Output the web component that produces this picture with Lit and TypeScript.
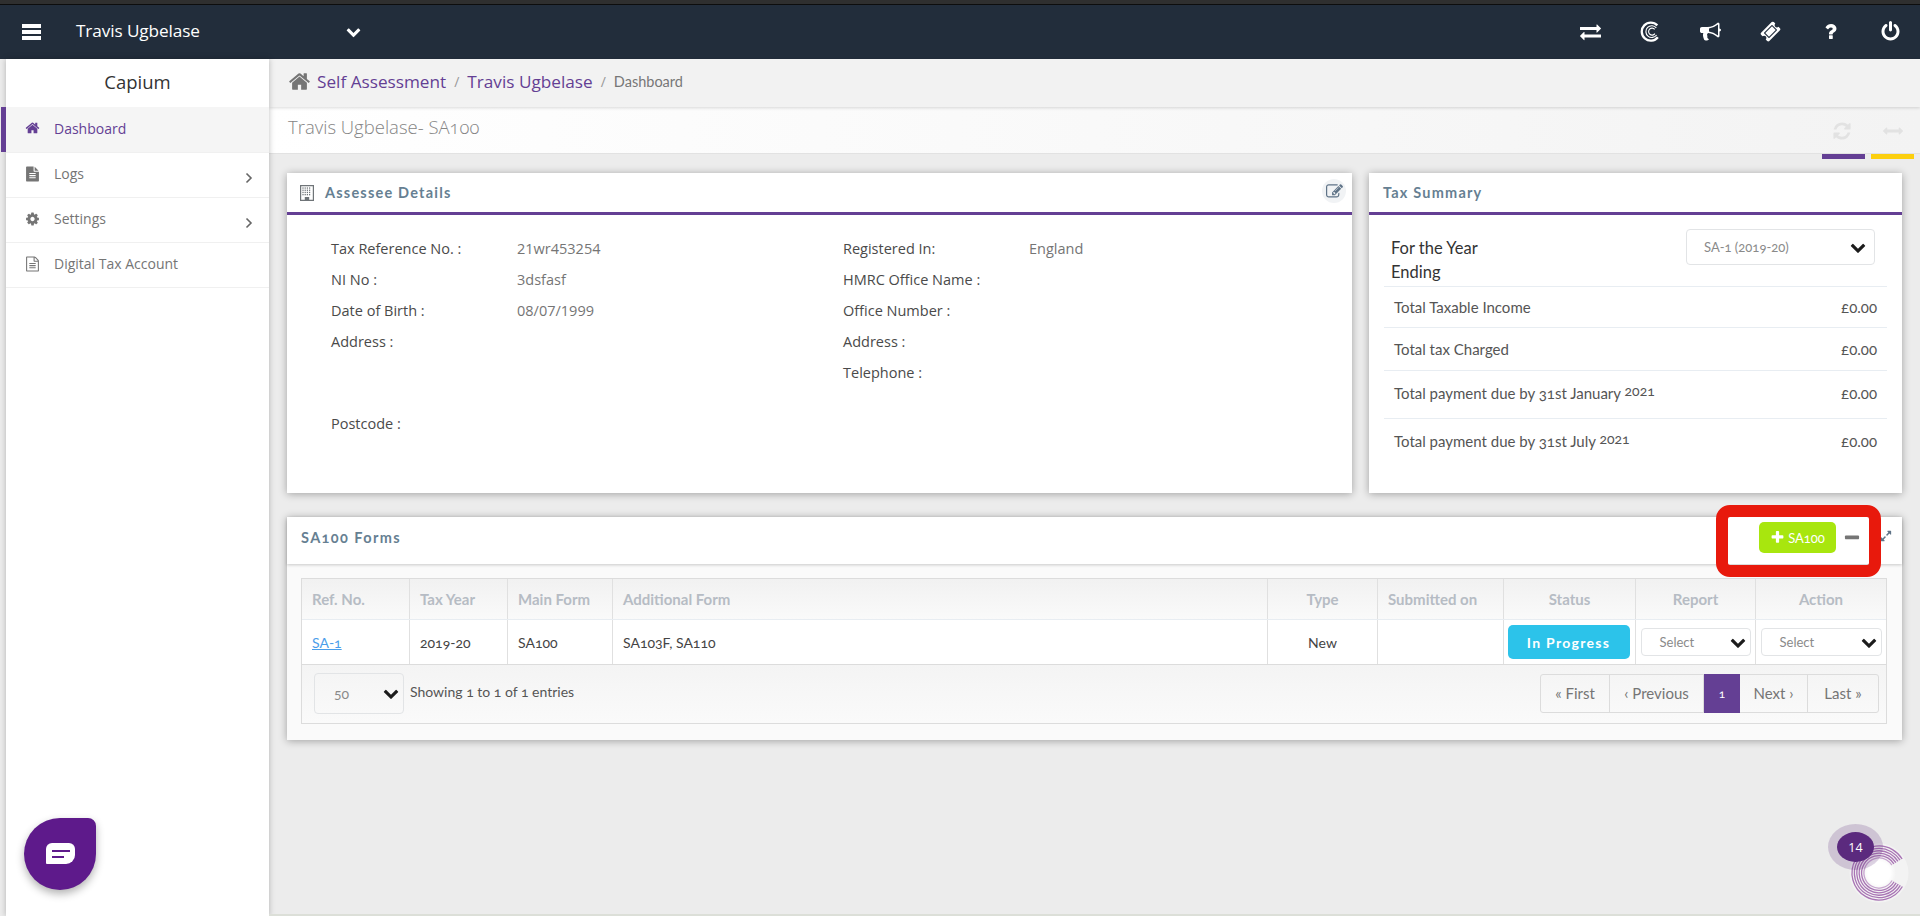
import { LitElement, html, css, svg } from "lit";
import { customElement } from "lit/decorators.js";

const P: Record<string, string> = {
  home: "M1472 992v480q0 26-19 45t-45 19h-384v-384h-256v384h-384q-26 0-45-19t-19-45v-480q0-1 .5-3t.5-3l575-474 575 474q1 2 1 6zm223-69l-62 74q-8 9-21 11h-3q-13 0-21-7l-692-577-692 577q-12 8-24 7-13-2-21-11l-62-74q-8-10-7-23.500t11-21.500l719-599q32-26 76-26t76 26l244 204v-195q0-14 9-23t23-9h192q14 0 23 9t9 23v408l219 182q10 8 11 21.500t-7 23.500z",
  cog: "M1152 896q0-106-75-181t-181-75-181 75-75 181 75 181 181 75 181-75 75-181zm512-109v222q0 12-8 23t-20 13l-185 28q-19 54-39 91 35 50 107 138 10 12 10 25t-9 23q-27 37-99 108t-94 71q-12 0-26-9l-138-108q-44 23-91 38-16 136-29 186-7 28-36 28h-222q-14 0-24.500-8.500t-11.500-21.500l-28-184q-49-16-90-37l-141 107q-10 9-25 9-14 0-25-11-126-114-165-168-7-10-7-23 0-12 8-23 15-21 51-66.500t54-70.500q-27-50-41-99l-183-27q-13-2-21-12.500t-8-23.500v-222q0-12 8-23t19-13l186-28q14-46 39-92-40-57-107-138-10-12-10-24 0-10 9-23 26-36 98.500-107.500t94.500-71.500q13 0 26 10l138 107q44-23 91-38 16-136 29-186 7-28 36-28h222q14 0 24.500 8.500t11.500 21.500l28 184q49 16 90 37l142-107q9-9 24-9 13 0 25 10 129 119 165 170 7 8 7 22 0 12-8 23-15 21-51 66.500t-54 70.500q26 50 41 98l183 28q13 2 21 12.500t8 23.500z",
  power: "M1664 896q0 156-61 298t-164 245-245 164-298 61-298-61-245-164-164-245-61-298q0-182 80.500-343t226.500-270q43-32 95.500-25t83.500 50q32 42 24.500 94.500t-49.500 84.500q-98 74-151.500 181t-53.500 228q0 104 40.500 198.500t109.500 163.500 163.500 109.500 198.500 40.500 198.500-40.500 163.500-109.500 109.500-163.500 40.500-198.500q0-121-53.500-228t-151.500-181q-42-32-49.500-84.500t24.500-94.500q31-43 84-50t95 25q146 109 226.500 270t80.500 343zm-640-768v640q0 52-38 90t-90 38-90-38-38-90v-640q0-52 38-90t90-38 90 38 38 90z",
  refresh: "M1639 1056q0 5-1 7-64 268-268 434.500t-478 166.500q-146 0-282.500-55t-243.500-157l-129 129q-19 19-45 19t-45-19-19-45v-448q0-26 19-45t45-19h448q26 0 45 19t19 45-19 45l-137 137q71 66 161 102t187 36q134 0 250-65t186-179q11-17 53-117 8-23 30-23h192q13 0 22.500 9.500t9.500 22.500zm25-800v448q0 26-19 45t-45 19h-448q-26 0-45-19t-19-45 19-45l138-138q-148-137-349-137-134 0-250 65t-186 179q-11 17-53 117-8 23-30 23h-199q-13 0-22.500-9.500t-9.500-22.500v-7q65-268 270-434.500t480-166.500q146 0 284 55.500t245 156.500l130-129q19-19 45-19t45 19 19 45z",
  exchange: "M1792 1184v192q0 13-9.500 22.500t-22.500 9.500h-1376v192q0 13-9.500 22.500t-22.500 9.500q-12 0-24-10l-319-320q-9-9-9-22 0-14 9-23l320-320q9-9 23-9 13 0 22.500 9.500t9.500 22.500v192h1376q13 0 22.500 9.500t9.500 22.500zm0-544q0 14-9 23l-320 320q-9 9-23 9-13 0-22.500-9.500t-9.500-22.500v-192h-1376q-13 0-22.500-9.500t-9.500-22.500v-192q0-13 9.500-22.500t22.500-9.500h1376v-192q0-14 9-23t23-9q12 0 24 10l319 319q9 9 9 23z",
  chev: "M1683 808l-742 741q-19 19-45 19t-45-19l-742-741q-19-19-19-45.500t19-45.500l166-165q19-19 45-19t45 19l531 531 531-531q19-19 45-19t45 19l166 165q19 19 19 45.500t-19 45.500z",
  bullhorn: "M1664 640q53 0 90.500 37.500t37.500 90.500-37.500 90.500-90.500 37.500v384q0 52-38 90t-90 38q-417-347-812-380-58 19-91 66t-31 100.500 40 92.500q-20 33-23 65.500t6 58 33.500 55 48 50 61.500 50.500q-29 58-111.500 83t-168.500 11.500-132-55.500q-7-23-29.500-87.500t-32-94.500-23-89-15-101 3.500-98.500 22-110.500h-122q-66 0-113-47t-47-113v-192q0-66 47-113t113-47h480q435 0 896-384 52 0 90 38t38 90v384zm-128 604v-954q-394 302-768 343v270q377 42 768 341z",
  ticket: "M1024 452l316 316-572 572-316-316zm-211 979l618-618q19-19 19-45t-19-45l-362-362q-18-18-45-18t-45 18l-618 618q-19 19-19 45t19 45l362 362q18 18 45 18t45-18zm889-637l-907 908q-37 37-90.500 37t-90.500-37l-126-126q56-56 56-136t-56-136-136-56-136 56l-125-126q-37-37-37-90.500t37-90.500l907-906q37-37 90.500-37t90.500 37l125 125q-56 56-56 136t56 136 136 56 136-56l126 125q37 37 37 90.500t-37 90.500z",
  question: "M1088 1256v240q0 16-12 28t-28 12h-240q-16 0-28-12t-12-28v-240q0-16 12-28t28-12h240q16 0 28 12t12 28zm316-600q0 54-15.500 101t-35 76.500-55 59.500-57.500 43.500-61 35.500q-41 23-68.500 65t-27.500 67q0 17-12 32.500t-28 15.500h-240q-15 0-25.500-18.500t-10.500-37.500v-45q0-83 65-156.500t143-108.500q59-27 84-56t25-76q0-42-46.500-74t-107.500-32q-65 0-108 29-35 25-107 115-13 16-31 16-12 0-25-8l-164-125q-13-10-15.500-25t5.500-28q160-266 464-266 80 0 161 31t146 83 106 127.500 41 158.500z",
  fileo: "M1596 380q28 28 48 76t20 88v1152q0 40-28 68t-68 28h-1344q-40 0-68-28t-28-68v-1600q0-40 28-68t68-28h896q40 0 88 20t76 48zm-444-244v376h376q-10-29-22-41l-313-313q-12-12-41-22zm384 1528v-1024h-416q-40 0-68-28t-28-68v-416h-768v1536h1280zm-1024-864q0-14 9-23t23-9h704q14 0 23 9t9 23v64q0 14-9 23t-23 9h-704q-14 0-23-9t-9-23v-64zm736 224q14 0 23 9t9 23v64q0 14-9 23t-23 9h-704q-14 0-23-9t-9-23v-64q0-14 9-23t23-9h704zm0 256q14 0 23 9t9 23v64q0 14-9 23t-23 9h-704q-14 0-23-9t-9-23v-64q0-14 9-23t23-9h704z",
  file: "M1596 476q14 14 28 36h-472v-472q22 14 36 28zm-476 164h544v1056q0 40-28 68t-68 28h-1344q-40 0-68-28t-28-68v-1600q0-40 28-68t68-28h800v544q0 40 28 68t68 28zm160 736v-64q0-14-9-23t-23-9h-704q-14 0-23 9t-9 23v64q0 14 9 23t23 9h704q14 0 23-9t9-23zm0-256v-64q0-14-9-23t-23-9h-704q-14 0-23 9t-9 23v64q0 14 9 23t23 9h704q14 0 23-9t9-23zm0-256v-64q0-14-9-23t-23-9h-704q-14 0-23 9t-9 23v64q0 14 9 23t23 9h704q14 0 23-9t9-23z",
  edit: "M888 1184l116-116-152-152-116 116v56h96v96h56zm440-720q-16-16-33 1l-350 350q-17 17-1 33t33-1l350-350q17-17 1-33zm80 594v190q0 119-84.500 203.500t-203.500 84.500h-832q-119 0-203.500-84.500t-84.500-203.500v-832q0-119 84.500-203.500t203.500-84.500h832q63 0 117 25 15 7 18 23 3 17-9 29l-49 49q-14 14-32 8-23-6-45-6h-832q-66 0-113 47t-47 113v832q0 66 47 113t113 47h832q66 0 113-47t47-113v-126q0-13 9-22l64-64q15-15 35-7t20 29zm-96-738l288 288-672 672h-288v-288zm444 132l-92 92-288-288 92-92q28-28 68-28t68 28l152 152q28 28 28 68t-28 68z",
  arrowsh: "M1792 896q0 26-19 45l-256 256q-19 19-45 19t-45-19-19-45v-128h-1024v128q0 26-19 45t-45 19-45-19l-256-256q-19-19-19-45t19-45l256-256q19-19 45-19t45 19 19 45v128h1024v-128q0-26 19-45t45-19 45 19l256 256q19 19 19 45z",
  expand: "M883 1056q0 13-10 23l-332 332 144 144q19 19 19 45t-19 45-45 19h-448q-26 0-45-19t-19-45v-448q0-26 19-45t45-19 45 19l144 144 332-332q10-10 23-10t23 10l114 114q10 10 10 23zm781-864v448q0 26-19 45t-45 19-45-19l-144-144-332 332q-10 10-23 10t-23-10l-114-114q-10-10-10-23t10-23l332-332-144-144q-19-19-19-45t19-45 45-19h448q26 0 45 19t19 45z",
  plus: "M1600 736v192q0 40-28 68t-68 28h-416v416q0 40-28 68t-68 28h-192q-40 0-68-28t-28-68v-416h-416q-40 0-68-28t-28-68v-192q0-40 28-68t68-28h416v-416q0-40 28-68t68-28h192q40 0 68 28t28 68v416h416q40 0 68 28t28 68z",
  minus: "M1600 736v192q0 40-28 68t-68 28h-1216q-40 0-68-28t-28-68v-192q0-40 28-68t68-28h1216q40 0 68 28t28 68z",
};

const icon = (name: string, cls = "") =>
  html`<svg class="ic ${cls}" viewBox="0 0 1792 1792" fill="currentColor" aria-hidden="true"><path d=${P[name]}></path></svg>`;

const building = html`<svg class="ic bld" viewBox="0 0 14 16" aria-hidden="true">
  <path fill="currentColor" fill-rule="evenodd" d="M0 0h14v16H0zM1.2 1.2v13.6h3.6V12h4.400v2.800h3.600V1.200z"></path>
  ${[2.4, 4.6, 6.8, 9].map((x) =>
    [2.4, 4.6, 6.8, 9].map(
      (y) => svg`<rect x=${x} y=${y} width="1.200" height="1.300" fill="currentColor"></rect>`
    )
  )}
</svg>`;

const angle = html`<svg class="angle" viewBox="0 0 8 12" aria-hidden="true"><path d="M1.500 1.500 6 6l-4.500 4.500" fill="none" stroke="currentColor" stroke-width="1.600"></path></svg>`;

const cmark = html`<svg class="ic" viewBox="0 0 20 20" aria-hidden="true" fill="none" stroke="currentColor">
  <path stroke-width="2.200" d="M16.500 4.200A8.600 8.600 0 1 0 17 15.500"></path>
  <path stroke-width="1.100" d="M15.500 6.500A5.600 5.600 0 1 0 15.800 13.300"></path>
  <path stroke-width="1.100" d="M14 8A3.300 3.300 0 1 0 14.200 12"></path>
</svg>`;

@customElement("app-root")
export class AppRoot extends LitElement {
  static styles = css`
    :host {
      display: block;
      position: relative;
      width: 1920px;
      height: 916px;
      overflow: hidden;
      background: #ececec;
      font-family: "Open Sans", "Noto Sans", sans-serif;
      color: #555;
    }
    .ic { display: block; width: 1em; height: 1em; flex: none; }
    .topline { height: 4px; background: #2f2f2f; border-bottom: 1px solid #0d0d0d; }
    .nav { height: 54px; background: #222d3b; color: #fff; display: flex; align-items: center; }
    .burger { display: block; width: 19px; height: 16px; margin-left: 22px; flex: none; }
    .nav .name { margin-left: 35px; font-size: 17.200px; width: 270px; padding-bottom: 4px; letter-spacing: -0.100px; }
    .navchev { font-size: 15px; margin-bottom: 1px; }
    .navicons { margin-left: auto; display: flex; }
    .navicons span { width: 60px; display: flex; justify-content: center; font-size: 21px; margin-top: -1px; }

    .layout { display: flex; height: 857px; }
    .side {
      width: 263px; margin-left: 6px; background: #fff; position: relative; z-index: 2;
      box-shadow: 0 0 6px rgba(0,0,0,.25);
    }
    .brand { height: 48px; padding-bottom: 3px; box-sizing: border-box; display: flex; align-items: center; justify-content: center; font-size: 18.500px; color: #333; }
    .mi {
      height: 45px; box-sizing: border-box; display: flex; align-items: center; padding: 0 0 3px 19px; gap: 14px;
      font-size: 14px; color: #757575; border-bottom: 1px solid #f0f0f0; position: relative;
    }
    .mi .ic { font-size: 16px; width: 15px; height: 16px; }
    .mi .angle { position: absolute; right: 16px; width: 8px; height: 12px; top: 19px; color: #666; }
    .mi.active { background: #f5f5f5; color: #643f94; height: 46px; }
    .mi.active::before { content: ""; position: absolute; left: -5px; top: 0; bottom: 0; width: 5px; background: #643f94; }

    .main { flex: 1; min-width: 0; display: flex; flex-direction: column; }
    .crumb {
      height: 48px; box-sizing: border-box; background: #f2f2f2; display: flex; align-items: center; padding: 0 0 3px 19px;
      box-shadow: 0 1px 3px rgba(0,0,0,.15); position: relative; z-index: 1;
    }
    .crumb .ic { font-size: 23px; color: #757575; margin-right: 6px; }
    .crumb a { font-size: 17.200px; color: #643f94; }
    .crumb .sep { color: #999; margin: 0 8px; font-size: 14px; }
    .crumb .cur { font-size: 14.500px; color: #777; font-family: "Lato", sans-serif; }
    .titlebar {
      height: 46px; border-bottom: 1px solid #e2e2e2; display: flex; align-items: flex-start;
      background: linear-gradient(90deg, #fff 0%, #f3f3f3 100%); padding-left: 19px;
    }
    .titlebar h1 {
      margin: 7px 0 0; font-weight: 300; font-size: 18.500px; color: #858585; flex: 1;
      font-family: "Open Sans", sans-serif; font-variant-numeric: oldstyle-nums;
    }
    .tool {
      width: 43px; height: 52px; box-sizing: border-box; border-bottom: 5px solid #643f94;
      margin-left: 6px; color: #e2e2e2; display: flex; justify-content: center; padding: 14px 4px 0 0;
      font-size: 20px;
    }
    .tool.y { border-bottom-color: #fccf0e; margin-right: 6px; padding-right: 0; }
    .content { flex: 1; padding: 19px 18px 0; display: flex; flex-direction: column; gap: 24px; }
    .row { display: flex; gap: 17px; }
    .card { background: #fff; box-shadow: 0 1px 8px rgba(0,0,0,.32); }
    .assessee { width: 1065px; height: 320px; }
    .tax { width: 533px; height: 320px; }
    .ch {
      height: 39px; border-bottom: 3px solid #643f94; display: flex; align-items: center; padding-left: 13px;
      font-family: "Lato", sans-serif; font-weight: 700; font-size: 14.500px; letter-spacing: 1.200px; color: #667f92;
      font-variant-numeric: oldstyle-nums; position: relative;
    }
    .ch .bld { width: 14px; height: 16px; margin-right: 11px; color: #6f7478; }
    .tax .ch { padding-left: 14px; }
    .editbtn {
      position: absolute; right: 6px; top: 6px; width: 24px; height: 24px; background: #f1f3f5; border-radius: 50%;
      display: flex; align-items: center; justify-content: center; font-size: 17px; color: #5f7387;
    }
    .details { display: flex; padding: 18px 0 0 44px; font-size: 14.500px; }
    .dcol { display: flex; flex-direction: column; }
    .dcol.a { width: 512px; }
    .dl { height: 31px; display: flex; align-items: center; color: #4a4a4a; }
    .dl b { font-weight: 400; width: 186px; flex: none; }
    .dl span { color: #757575; }
    .dl.tall { height: 82px; align-items: flex-start; padding-top: 6px; box-sizing: border-box; }

    .taxbody { padding: 0 15px; font-family: "Lato", sans-serif; font-variant-numeric: oldstyle-nums; color: #555; font-size: 15px; }
    .yr { display: flex; justify-content: space-between; height: 71px; padding: 21px 0 0 7px; box-sizing: border-box; font-size: 16.500px; color: #333; line-height: 24px; }
    .yr .sel { width: 189px; margin: -7px 12px 0 0; height: 36px; }
    .sel {
      border: 1px solid #e2e4e6; border-radius: 4px; box-sizing: border-box; display: flex; align-items: center;
      justify-content: space-between; background: #fff; font-size: 13px; color: #8a8a8a; padding: 0 8px 0 17px;
      font-family: "Lato", sans-serif; font-variant-numeric: oldstyle-nums;
    }
    .sel .ic { font-size: 16px; color: #1c1c1c; }
    .tr { display: flex; justify-content: space-between; align-items: center; border-top: 1px solid #e8edf2; padding: 0 10px; height: 40px; }
    .tr.t2 { height: 42px; }
    .tr.t3, .tr.t4 { height: 48px; padding-bottom: 4px; box-sizing: border-box; }
    .tr .sup { font-size: 14px; position: relative; top: -3px; }

    .forms { width: 1615px; height: 223px; }
    .fh {
      height: 47px; box-sizing: border-box; padding: 0 0 6px 14px; display: flex; align-items: center; position: relative;
      font-family: "Lato", sans-serif; font-weight: 700; font-size: 14.500px; letter-spacing: 1.400px; color: #667f92;
      font-variant-numeric: oldstyle-nums; box-shadow: 0 1px 3px rgba(0,0,0,.2);
    }
    .addbtn {
      position: absolute; left: 1472px; top: 5px; width: 77px; height: 31px; background: #a8e60e; border-radius: 5px;
      color: #fff; display: flex; align-items: center; justify-content: center; gap: 3px; font-size: 13px; letter-spacing: 0; font-weight: 400;
    }
    .addbtn .ic { font-size: 15px; }
    .minusbtn { position: absolute; left: 1556px; top: 12px; font-size: 18px; color: #757575; }
    .expbtn { position: absolute; left: 1593px; top: 13px; font-size: 12px; color: #5f7387; }
    .fb { background: #fafafa; padding: 14px 15px 0 14px; height: 176px; box-sizing: border-box; }
    .table { border: 1px solid #dcdcdc; font-family: "Lato", sans-serif; font-variant-numeric: oldstyle-nums; }
    .g { display: grid; grid-template-columns: 108px 98px 105px 655px 110px 126px 132px 120px 1fr; }
    .g > div { border-right: 1px solid #e0e0e0; display: flex; align-items: center; padding-left: 10px; box-sizing: border-box; font-size: 14px; }
    .g > div:last-child { border-right: 0; }
    .g > div.c { justify-content: center; padding: 0; }
    .thead { height: 40px; background: linear-gradient(#f1f1f1, #fafafa); border-bottom: 1px solid #e8edf2; }
    .thead > div { color: #b6bcc4; font-weight: 700; padding-bottom: 1px; }
    .g.thead > div { font-size: 15px; }
    .tbody { height: 44px; background: #fff; border-bottom: 1px solid #dcdcdc; color: #444; }
    .tbody a { color: #4a9eea; text-decoration: underline; }
    .status {
      width: 122px; height: 34px; margin-left: -2px; border-radius: 5px; background: #2cc3ea; color: #fff; display: flex; align-items: center;
      justify-content: center; font-weight: 700; font-size: 14px; letter-spacing: 1.300px;
    }
    .tbody .sel { width: 110px; height: 28px; padding: 0 4px 0 18px; }
    .tbody .sel.wide { width: 121px; }
    .tfoot { height: 58px; box-sizing: border-box; display: flex; align-items: center; padding: 0 7px 2px 12px; font-size: 14px; background: linear-gradient(#f4f4f4, #fafafa); color: #555; }
    .tfoot .sel { width: 90px; height: 41px; background: transparent; margin-right: 6px; font-size: 14px; padding: 0 4px 0 19px; }
    .tfoot .info { margin-top: -3px; }
    .pager { margin-left: auto; display: flex; height: 39px; border: 1px solid #dcdcdc; border-radius: 3px; box-sizing: border-box; color: #757575; font-size: 15px; }
    .pager div { display: flex; align-items: center; justify-content: center; border-right: 1px solid #dcdcdc; box-sizing: border-box; }
    .pager div:last-child { border-right: 0; }
    .pager .on { background: #643f94; color: #fff; border-right: 0; font-size: 12px; margin: -1px 0; }
    .w69 { width: 69px; } .w94 { width: 94px; } .w36 { width: 36px; } .w68 { width: 68px; } .w70 { width: 70px; }

    .mark {
      position: absolute; left: 1716px; top: 505px; width: 165px; height: 72px; box-sizing: border-box;
      border: 12px solid #e8190c; border-radius: 14px; z-index: 5; pointer-events: none;
    }
    .chat {
      position: absolute; left: 24px; top: 818px; width: 72px; height: 72px; background: #5e1a8b;
      border-radius: 50% 8px 50% 50%; box-shadow: 0 4px 8px rgba(0,0,0,.3); z-index: 4;
      display: flex; align-items: center; justify-content: center;
    }
    .chat svg { width: 29px; height: 22px; display: block; }
    .halo { position: absolute; left: 1828px; top: 824px; width: 55px; height: 46px; border-radius: 50%; background: rgba(90,40,120,.2); z-index: 4; }
    .logo { position: absolute; left: 1849px; top: 843px; width: 60px; height: 60px; z-index: 3; filter: blur(.35px); }
    .badge {
      position: absolute; left: 1837px; top: 832px; width: 37px; height: 30px; border-radius: 50%; background: #5b2a7e;
      color: #fff; font-size: 12.500px; display: flex; align-items: center; justify-content: center; z-index: 5;
    }
    .bottom { position: absolute; left: 269px; right: 0; bottom: 0; height: 2px; background: #dcdfd8; z-index: 3; }
  `;

  render() {
    return html`
      <div class="topline"></div>
      <header class="nav">
        <svg class="burger" viewBox="0 0 19 16" fill="#fff" aria-hidden="true">
          <rect width="19" height="4"></rect><rect y="6" width="19" height="4"></rect><rect y="12" width="19" height="4"></rect>
        </svg>
        <span class="name">Travis Ugbelase</span>
        <span class="navchev">${icon("chev")}</span>
        <div class="navicons">
          <span>${icon("exchange")}</span>
          <span>${cmark}</span>
          <span>${icon("bullhorn")}</span>
          <span>${icon("ticket")}</span>
          <span>${icon("question")}</span>
          <span>${icon("power")}</span>
        </div>
      </header>
      <div class="layout">
        <aside class="side">
          <div class="brand">Capium</div>
          <div class="mi active">${icon("home")}Dashboard</div>
          <div class="mi">${icon("file")}Logs${angle}</div>
          <div class="mi">${icon("cog")}Settings${angle}</div>
          <div class="mi">${icon("fileo")}Digital Tax Account</div>
        </aside>
        <main class="main">
          <nav class="crumb">
            ${icon("home")}<a>Self Assessment</a><span class="sep">/</span><a>Travis Ugbelase</a><span class="sep">/</span><span class="cur">Dashboard</span>
          </nav>
          <div class="titlebar">
            <h1>Travis Ugbelase- SA100</h1>
            <div class="tool">${icon("refresh")}</div>
            <div class="tool y">${icon("arrowsh")}</div>
          </div>
          <div class="content">
            <div class="row">
              <section class="card assessee">
                <div class="ch">${building}Assessee Details<span class="editbtn">${icon("edit")}</span></div>
                <div class="details">
                  <div class="dcol a">
                    <div class="dl"><b>Tax Reference No. :</b><span>21wr453254</span></div>
                    <div class="dl"><b>NI No :</b><span>3dsfasf</span></div>
                    <div class="dl"><b>Date of Birth :</b><span>08/07/1999</span></div>
                    <div class="dl tall"><b>Address :</b></div>
                    <div class="dl"><b>Postcode :</b></div>
                  </div>
                  <div class="dcol">
                    <div class="dl"><b>Registered In:</b><span>England</span></div>
                    <div class="dl"><b>HMRC Office Name :</b></div>
                    <div class="dl"><b>Office Number :</b></div>
                    <div class="dl"><b>Address :</b></div>
                    <div class="dl"><b>Telephone :</b></div>
                  </div>
                </div>
              </section>
              <section class="card tax">
                <div class="ch">Tax Summary</div>
                <div class="taxbody">
                  <div class="yr">
                    <div>For the Year<br />Ending</div>
                    <div class="sel">SA-1 (2019-20)${icon("chev")}</div>
                  </div>
                  <div class="tr"><span>Total Taxable Income</span><span>£0.00</span></div>
                  <div class="tr t2"><span>Total tax Charged</span><span>£0.00</span></div>
                  <div class="tr t3"><span>Total payment due by 31st January <span class="sup">2021</span></span><span>£0.00</span></div>
                  <div class="tr t4"><span>Total payment due by 31st July <span class="sup">2021</span></span><span>£0.00</span></div>
                </div>
              </section>
            </div>
            <section class="card forms">
              <div class="fh">SA100 Forms
                <span class="addbtn">${icon("plus")}SA100</span>
                <span class="minusbtn">${icon("minus")}</span>
                <span class="expbtn">${icon("expand")}</span>
              </div>
              <div class="fb">
                <div class="table">
                  <div class="g thead">
                    <div>Ref. No.</div><div>Tax Year</div><div>Main Form</div><div>Additional Form</div>
                    <div class="c">Type</div><div>Submitted on</div><div class="c">Status</div><div class="c">Report</div><div class="c">Action</div>
                  </div>
                  <div class="g tbody">
                    <div><a>SA-1</a></div><div>2019-20</div><div>SA100</div><div>SA103F, SA110</div>
                    <div class="c">New</div><div class="c"></div>
                    <div class="c"><span class="status">In Progress</span></div>
                    <div class="c"><span class="sel">Select${icon("chev")}</span></div>
                    <div class="c"><span class="sel wide">Select${icon("chev")}</span></div>
                  </div>
                  <div class="tfoot">
                    <span class="sel">50${icon("chev")}</span>
                    <span class="info">Showing 1 to 1 of 1 entries</span>
                    <div class="pager">
                      <div class="w69">« First</div>
                      <div class="w94">‹ Previous</div>
                      <div class="on w36">1</div>
                      <div class="w68">Next ›</div>
                      <div class="w70">Last »</div>
                    </div>
                  </div>
                </div>
              </div>
            </section>
          </div>
        </main>
      </div>

      <div class="mark"></div>
      <div class="chat">
        <svg viewBox="0 0 29 22" aria-hidden="true">
          <path fill="#fff" d="M6 0h17a6 6 0 0 1 6 6v6a9 9 0 0 1-9 9H1a1 1 0 0 1-1-1V6a6 6 0 0 1 6-6z"></path>
          <rect x="6" y="7" width="18" height="2" fill="#5e1a8b"></rect>
          <rect x="6" y="13" width="12" height="2" fill="#5e1a8b"></rect>
        </svg>
      </div>
      <svg class="logo" viewBox="0 0 60 60" aria-hidden="true">
        <defs>
          <radialGradient id="core"><stop offset="65%" stop-color="#fff"></stop><stop offset="100%" stop-color="#fff" stop-opacity="0"></stop></radialGradient>
        </defs>
        <circle cx="30" cy="30" r="29.500" fill="#f3f3f3"></circle>
        ${[15, 17.400, 19.800, 22.200, 24.600, 27].map(
          (r) => svg`<circle cx="30" cy="30" r=${r} fill="none" stroke="#a975b5" stroke-width="1.300" pathLength="100" stroke-dasharray="83 17" transform="rotate(30 30 30)"></circle>`
        )}
        <circle cx="30" cy="30" r="17" fill="url(#core)"></circle>
      </svg>
      <div class="halo"></div>
      <div class="badge">14</div>
      <div class="bottom"></div>
    `;
  }
}
